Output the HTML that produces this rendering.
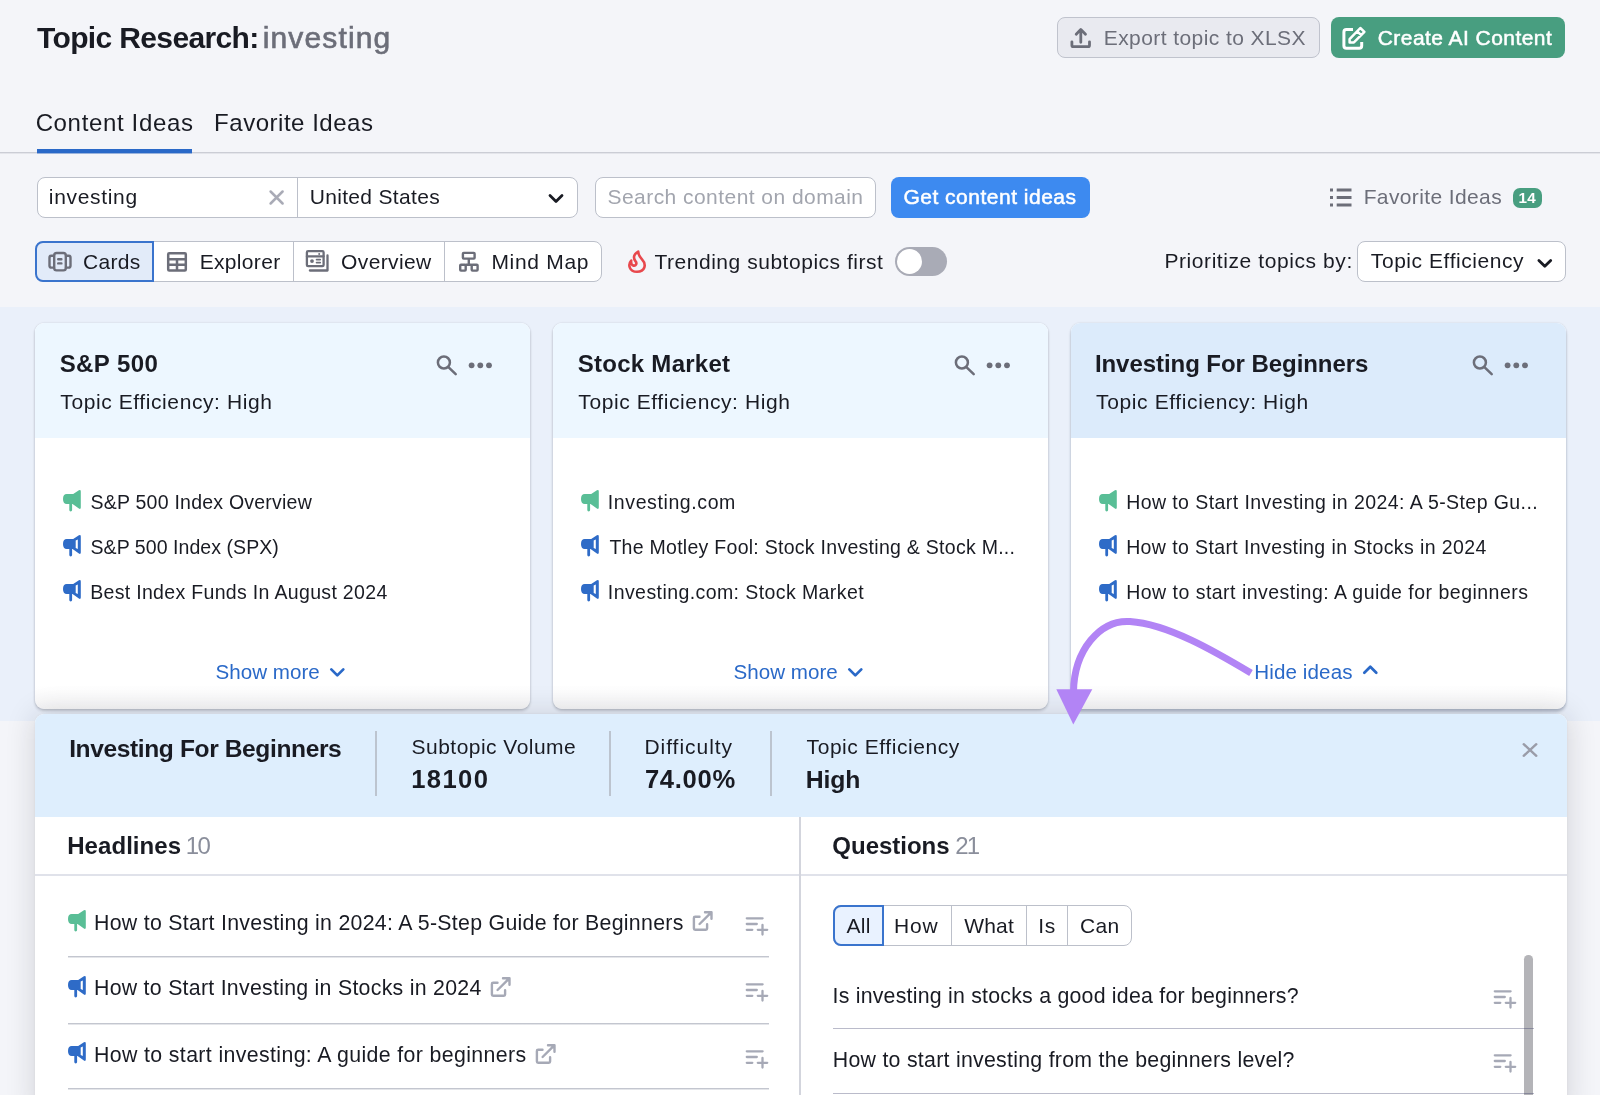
<!DOCTYPE html>
<html lang="en">
<head>
<meta charset="utf-8">
<title>Topic Research: investing</title>
<style>
html,body{margin:0;padding:0}
body{width:1600px;height:1095px;overflow:hidden;background:#f4f5f9;font-family:"Liberation Sans",Arial,sans-serif;color:#191b23}
#root{position:relative;width:1600px;height:1095px;overflow:hidden;background:#f4f5f9}
#root div,#root span,#root svg,#root button,#root a,#root header,#root nav,#root section,#root article,#root main,#root h1,#root h2,#root h3,#root p,#root ul,#root li,#root label{position:absolute;box-sizing:border-box;margin:0;padding:0;list-style:none;font-weight:400}
#root button{font:inherit;color:inherit;border:0;background:none;text-align:left}
#root .t{white-space:nowrap;line-height:1;text-decoration:none;color:#191b23;will-change:transform}
#root .box{background:#fff;border:1px solid #bcc0ca;border-radius:8px}
.vd{width:1px;background:#bcc0ca}
.hl{height:2px;background:linear-gradient(#c3c6cf 50%,rgba(195,198,207,.45) 50%)}
svg{overflow:visible}
.card{background:linear-gradient(#fff 0,#fff 94%,#f6f6f7 100%);border-radius:9px;box-shadow:0 2px 3px rgba(25,27,35,.2),0 0 2px rgba(25,27,35,.16);width:495px;height:386px;top:16px}
.card .hd{left:0;top:0;width:495px;height:115px;border-radius:9px 9px 0 0;background:#edf7ff}
.card.sel .hd{background:#dcebfb}
.card.sel{box-shadow:0 3px 3px rgba(25,40,70,.26),0 0 2px rgba(25,27,35,.16)}
</style>
</head>
<body>
<div id="root">
<header style="left:0;top:0;width:1600px;height:100px">
<h1 style="left:0;top:0;width:420px;height:70px"><span class="t" style="left:37px;top:23px;padding:0.08px 0 0 0.06px;font-size:30.03px;font-weight:700;letter-spacing:-0.65px;">Topic Research:</span><span class="t" style="left:262px;top:23px;padding:0.08px 0 0 0.72px;font-size:30.03px;letter-spacing:1.14px;color:#6c6e79;-webkit-text-stroke:0.65px #6c6e79;">investing</span></h1>
<button class="box" style="left:1057px;top:17px;width:263px;height:41px;background:#e9eaf0;border:1px solid #c0c3cd"><svg style="left:10px;top:7px" width="26" height="26" viewBox="1068 25 26 26" fill="none" stroke="#6c6e79" stroke-linecap="round" stroke-linejoin="round" stroke-width="2.8"><path d="M1080.8 42.3V29.6M1076.2 34.3l4.6-4.9 4.7 4.9M1071.9 41.8v3.4q0 1.5 1.5 1.5h14.6q1.5 0 1.5-1.5v-3.4"/></svg><span class="t" style="left:45px;top:9px;padding:0.22px 0 0 0.72px;font-size:21px;letter-spacing:0.42px;color:#6c6e79;">Export topic to XLSX</span></button>
<button style="left:1331px;top:17px;width:234px;height:41px;background:#489e80;border-radius:8px"><svg style="left:9px;top:7px" width="30" height="28" viewBox="1340 24 30 28" fill="none" stroke="#fff" stroke-width="3" stroke-linejoin="round"><path d="M1353 29.4h-6.6q-2.5 0-2.5 2.5v13.9q0 2.5 2.5 2.5h12.8q2.5 0 2.5-2.5v-3.7"/><path stroke-width="2.5" d="M1349.6 39.2l10.7-11.2 4.1 3.8-10.5 10.6h-4.3zM1357.2 31.3l4 3.8"/></svg><span class="t" style="left:46px;top:10px;padding:0.22px 0 0 0.7px;font-size:21px;letter-spacing:0.45px;color:#ffffff;-webkit-text-stroke:0.5px #ffffff;">Create AI Content</span></button>
</header>
<nav style="left:0;top:100px;width:1600px;height:54px">
<div style="left:0px;top:52px;width:1600px;height:2px;background:linear-gradient(#cbcdd5 50%,rgba(203,205,213,.4) 50%)"></div>
<a class="t" style="left:35px;top:10px;padding:0.65px 0 0 0.64px;font-size:24.04px;letter-spacing:0.64px;">Content Ideas</a><div style="left:37px;top:49px;width:155px;height:5px;background:linear-gradient(#2a69c8 80%,rgba(42,105,200,.4) 80%)"></div>
<a class="t" style="left:214px;top:10px;padding:0.65px 0 0 0.1px;font-size:24.04px;letter-spacing:0.51px;">Favorite Ideas</a>
</nav>
<section style="left:0;top:170px;width:1600px;height:56px">
<div class="box" style="left:37px;top:7px;width:541px;height:41px;"><span class="t" style="left:10px;top:7px;padding:0.72px 0 0 0.85px;font-size:21px;letter-spacing:0.67px;">investing</span><svg style="left:228px;top:9px" width="22" height="22" viewBox="266 187 22 22" fill="none" stroke="#a9abb6" stroke-width="2.5" stroke-linecap="round"><path d="M270.6 191.5l12 12M282.6 191.5l-12 12"/></svg><div class="vd" style="left:259px;top:0px;width:1px;height:39px;"></div><span class="t" style="left:271px;top:8px;padding:0.22px 0 0 0.65px;font-size:21px;letter-spacing:0.33px;">United States</span><svg style="left:507px;top:12px" width="22" height="18" viewBox="545 190 22 18" fill="none" stroke="#191b23" stroke-width="2.8" stroke-linecap="round" stroke-linejoin="round"><path d="M550 195.5l6 6 6-6"/></svg></div>
<div class="box" style="left:595px;top:7px;width:281px;height:41px;"><span class="t" style="left:11px;top:7px;padding:0.72px 0 0 0.51px;font-size:21px;letter-spacing:0.45px;color:#a2a5ae;">Search content on domain</span></div>
<button style="left:891px;top:7px;width:199px;height:41px;background:#3d8af0;border-radius:8px"><span class="t" style="left:12px;top:9px;padding:0.22px 0 0 0.44px;font-size:21px;letter-spacing:0.5px;color:#ffffff;-webkit-text-stroke:0.5px #ffffff;">Get content ideas</span></button>
<a style="left:1326px;top:14px;width:220px;height:28px;"><svg style="left:2px;top:2px" width="26" height="24" viewBox="1328 186 26 24" fill="none" stroke="#6c6e79" stroke-width="2.8"><path d="M1336.7 190h14.8M1336.7 197.5h14.8M1336.7 205h14.8M1330 190h3M1330 197.5h3M1330 205h3"/></svg><span class="t" style="left:37px;top:2px;padding:0.22px 0 0 0.64px;font-size:21px;letter-spacing:0.38px;color:#6c6e79;">Favorite Ideas</span><span style="left:187px;top:4px;width:29px;height:20px;border-radius:7px;background:#489e80"><span class="t" style="left:5px;top:1px;padding:0.81px 0 0 0.51px;font-size:15.23px;font-weight:700;letter-spacing:0.19px;color:#ffffff;">14</span></span></a>
</section>
<section style="left:0;top:236px;width:1600px;height:52px">
<div class="box" style="left:36px;top:5px;width:566px;height:41px;"><div style="left:-2px;top:-1px;width:119px;height:41px;background:#e2ebf9;border:2px solid #3a74cd;border-radius:8px 0 0 8px"></div><div class="vd" style="left:256px;top:0px;width:1px;height:39px;"></div><div class="vd" style="left:407px;top:0px;width:1px;height:39px;"></div><svg style="left:9px;top:8px" width="28" height="24" viewBox="46 250 28 24" fill="none" stroke="#6c6e79" stroke-linecap="round" stroke-linejoin="round" stroke-width="2.4"><rect x="54.2" y="253" width="11.6" height="17.4" rx="2.4"/><path d="M54 255.8h-2.6q-1.9 0-1.9 1.9v8q0 1.9 1.9 1.9h2.6M66 255.8h2.6q1.9 0 1.9 1.9v8q0 1.9-1.9 1.9h-2.6M58.2 259.3h3.2M58.2 263.4h3.2"/></svg><span class="t" style="left:45px;top:9px;padding:0.22px 0 0 0.96px;font-size:21px;letter-spacing:0.29px;">Cards</span><svg style="left:128px;top:8px" width="24" height="24" viewBox="165 250 24 24" fill="none" stroke="#6c6e79" stroke-width="2.5" stroke-linejoin="round"><rect x="168.2" y="253.2" width="17.6" height="17.2" rx="1"/><path d="M168.2 259.2h17.6M168.2 264.8h17.6M177 259.2v11.2"/></svg><span class="t" style="left:162px;top:9px;padding:0.22px 0 0 0.72px;font-size:21px;letter-spacing:0.32px;">Explorer</span><svg style="left:266px;top:6px" width="28" height="26" viewBox="303 248 28 26" fill="none" stroke="#6c6e79" stroke-linecap="round" stroke-linejoin="round" stroke-width="2.3"><rect x="306.9" y="251.2" width="16.7" height="15" rx="1.2"/><path d="M306.9 256.3h16.7M327.5 255.4v15.1h-17.6"/><path stroke-width="1.8" d="M316.6 259.6h3.6M316.6 262.6h3.6"/><circle cx="312" cy="261.1" r="1.9" fill="#6c6e79" stroke="none"/><circle cx="319.2" cy="253.9" r="1" fill="#6c6e79" stroke="none"/></svg><span class="t" style="left:304px;top:9px;padding:0.22px 0 0 0.09px;font-size:21px;letter-spacing:0.36px;">Overview</span><svg style="left:419px;top:7px" width="26" height="26" viewBox="456 249 26 26" fill="none" stroke="#6c6e79" stroke-width="2.4" stroke-linejoin="round"><rect x="462.9" y="252.9" width="11.7" height="5.7" rx=".8"/><rect x="460.2" y="264.8" width="5.5" height="5.8" rx=".8"/><rect x="471.7" y="264.8" width="5.9" height="5.8" rx=".8"/><path d="M468.8 258.6v6.2M465.7 264.8h6"/></svg><span class="t" style="left:454px;top:9px;padding:0.22px 0 0 0.4px;font-size:21px;letter-spacing:0.69px;">Mind Map</span></div>
<label style="left:624px;top:8px;width:326px;height:34px;"><svg style="left:2px;top:4px" width="24" height="28" viewBox="626 247.3 24 28" fill="none" stroke="#e8484d" stroke-width="2.6" stroke-linejoin="round" stroke-linecap="round"><path d="M638.2 250.9c-4.8 2.6-5.2 6.6-2.6 9.7 1.7 2.1 .3 4.7-2 4.3-1.8-.3-2.7-2.6-2.4-5-3.4 3.8-2.2 11.2 5.8 11.2 8 0 9.8-7.3 5-12.4-2.1-2.3-3.7-4.8-3.8-7.8z"/></svg><span class="t" style="left:30px;top:7px;padding:0.22px 0 0 0.45px;font-size:21px;letter-spacing:0.53px;">Trending subtopics first</span><span style="left:271px;top:3px;width:52px;height:29px;border-radius:14.5px;background:#a9abb6"><span style="left:2px;top:2px;width:25px;height:25px;border-radius:50%;background:#fff"></span></span></label>
<label class="t" style="left:1164px;top:13px;padding:0.72px 0 0 0.4px;font-size:21px;letter-spacing:0.58px;">Prioritize topics by:</label>
<div class="box" style="left:1357px;top:5px;width:209px;height:41px;"><span class="t" style="left:12px;top:8px;padding:0.22px 0 0 0.84px;font-size:21px;letter-spacing:0.56px;">Topic Efficiency</span><svg style="left:176px;top:13px" width="22" height="18" viewBox="1534 255 22 18" fill="none" stroke="#191b23" stroke-width="2.8" stroke-linecap="round" stroke-linejoin="round"><path d="M1538.9 260.4l5.9 5.9 5.9-5.9"/></svg></div>
</section>
<main style="left:0;top:307px;width:1600px;height:788px">
<div style="left:0;top:0;width:1600px;height:414px;background:#eaf0fa"></div>
<article class="card" style="left:35px">
<div class="hd"><h3 class="t" style="left:24px;top:28px;padding:0.65px 0 0 0.68px;font-size:24.04px;font-weight:700;letter-spacing:0.4px;">S&amp;P 500</h3><p class="t" style="left:25px;top:68px;padding:0.22px 0 0 0.31px;font-size:21px;letter-spacing:0.59px;">Topic Efficiency: High</p><svg style="left:398px;top:30px" width="64" height="26" viewBox="398 30 64 26" fill="none" stroke="#6c6e79" stroke-width="2.5" stroke-linecap="round"><circle cx="408.9" cy="39.5" r="6"/><path d="M413.4 44.1l7.3 7.1"/><g fill="#6c6e79" stroke="none"><circle cx="436.6" cy="42.3" r="2.9"/><circle cx="445.3" cy="42.3" r="2.9"/><circle cx="454" cy="42.3" r="2.9"/></g></svg></div>
<ul style="left:0;top:150px;width:495px;height:140px">
<li><svg style="left:27.7px;top:16.9px" width="18" height="22" viewBox="0 0 18 22"><path fill="#59be96" d="M3.8 4H10.2L15.9 .3Q17.8-.6 17.8 1.4V17.5Q17.8 19.5 15.9 18.6L9.6 13.9H9.1V20Q9.1 21.4 7.7 21.4Q6.3 21.4 6.3 20V13.9H3.8Q0 13.9 0 8.95Q0 4 3.8 4Z"/></svg><span class="t" style="left:55px;top:20px;padding:0.22px 0 0 0.55px;font-size:19.53px;letter-spacing:0.22px;">S&amp;P 500 Index Overview</span></li>
<li><svg style="left:27.7px;top:62.15px" width="18" height="22" viewBox="0 0 18 22"><path fill="#2e6bc7" fill-rule="evenodd" d="M3.8 4H10.2L15.9 .3Q17.8-.6 17.8 1.4V17.5Q17.8 19.5 15.9 18.6L9.6 13.9H9.1V20Q9.1 21.4 7.7 21.4Q6.3 21.4 6.3 20V13.9H3.8Q0 13.9 0 8.95Q0 4 3.8 4ZM12.7 5.5L14.8 4.6V14.1L12.7 13.1Z"/></svg><span class="t" style="left:55px;top:65px;padding:0.22px 0 0 0.55px;font-size:19.53px;letter-spacing:0.05px;">S&amp;P 500 Index (SPX)</span></li>
<li><svg style="left:27.7px;top:107.4px" width="18" height="22" viewBox="0 0 18 22"><path fill="#2e6bc7" fill-rule="evenodd" d="M3.8 4H10.2L15.9 .3Q17.8-.6 17.8 1.4V17.5Q17.8 19.5 15.9 18.6L9.6 13.9H9.1V20Q9.1 21.4 7.7 21.4Q6.3 21.4 6.3 20V13.9H3.8Q0 13.9 0 8.95Q0 4 3.8 4ZM12.7 5.5L14.8 4.6V14.1L12.7 13.1Z"/></svg><span class="t" style="left:55px;top:109px;padding:0.72px 0 0 0.13px;font-size:19.53px;letter-spacing:0.32px;">Best Index Funds In August 2024</span></li>
</ul>
<a class="t" style="left:180px;top:338px;padding:0.78px 0 0 0.55px;font-size:20.58px;letter-spacing:0.008px;color:#2a69c8;">Show more</a><svg style="left:292px;top:341px" width="22" height="16" viewBox="292 341 22 16" fill="none" stroke="#2a69c8" stroke-width="2.7" stroke-linecap="round" stroke-linejoin="round"><path d="M296.3 346.4l6 6 6-6"/></svg>
</article>
<article class="card" style="left:553px">
<div class="hd"><h3 class="t" style="left:24px;top:28px;padding:0.65px 0 0 0.68px;font-size:24.04px;font-weight:700;letter-spacing:0.26px;">Stock Market</h3><p class="t" style="left:25px;top:68px;padding:0.22px 0 0 0.31px;font-size:21px;letter-spacing:0.59px;">Topic Efficiency: High</p><svg style="left:398px;top:30px" width="64" height="26" viewBox="398 30 64 26" fill="none" stroke="#6c6e79" stroke-width="2.5" stroke-linecap="round"><circle cx="408.9" cy="39.5" r="6"/><path d="M413.4 44.1l7.3 7.1"/><g fill="#6c6e79" stroke="none"><circle cx="436.6" cy="42.3" r="2.9"/><circle cx="445.3" cy="42.3" r="2.9"/><circle cx="454" cy="42.3" r="2.9"/></g></svg></div>
<ul style="left:0;top:150px;width:495px;height:140px">
<li><svg style="left:27.7px;top:16.9px" width="18" height="22" viewBox="0 0 18 22"><path fill="#59be96" d="M3.8 4H10.2L15.9 .3Q17.8-.6 17.8 1.4V17.5Q17.8 19.5 15.9 18.6L9.6 13.9H9.1V20Q9.1 21.4 7.7 21.4Q6.3 21.4 6.3 20V13.9H3.8Q0 13.9 0 8.95Q0 4 3.8 4Z"/></svg><span class="t" style="left:54px;top:20px;padding:0.22px 0 0 0.87px;font-size:19.53px;letter-spacing:0.59px;">Investing.com</span></li>
<li><svg style="left:27.7px;top:62.15px" width="18" height="22" viewBox="0 0 18 22"><path fill="#2e6bc7" fill-rule="evenodd" d="M3.8 4H10.2L15.9 .3Q17.8-.6 17.8 1.4V17.5Q17.8 19.5 15.9 18.6L9.6 13.9H9.1V20Q9.1 21.4 7.7 21.4Q6.3 21.4 6.3 20V13.9H3.8Q0 13.9 0 8.95Q0 4 3.8 4ZM12.7 5.5L14.8 4.6V14.1L12.7 13.1Z"/></svg><span class="t" style="left:56px;top:65px;padding:0.22px 0 0 0.4px;font-size:19.53px;letter-spacing:0.27px;">The Motley Fool: Stock Investing &amp; Stock M...</span></li>
<li><svg style="left:27.7px;top:107.4px" width="18" height="22" viewBox="0 0 18 22"><path fill="#2e6bc7" fill-rule="evenodd" d="M3.8 4H10.2L15.9 .3Q17.8-.6 17.8 1.4V17.5Q17.8 19.5 15.9 18.6L9.6 13.9H9.1V20Q9.1 21.4 7.7 21.4Q6.3 21.4 6.3 20V13.9H3.8Q0 13.9 0 8.95Q0 4 3.8 4ZM12.7 5.5L14.8 4.6V14.1L12.7 13.1Z"/></svg><span class="t" style="left:54px;top:109px;padding:0.72px 0 0 0.87px;font-size:19.53px;letter-spacing:0.41px;">Investing.com: Stock Market</span></li>
</ul>
<a class="t" style="left:180px;top:338px;padding:0.78px 0 0 0.55px;font-size:20.58px;letter-spacing:0.008px;color:#2a69c8;">Show more</a><svg style="left:292px;top:341px" width="22" height="16" viewBox="292 341 22 16" fill="none" stroke="#2a69c8" stroke-width="2.7" stroke-linecap="round" stroke-linejoin="round"><path d="M296.3 346.4l6 6 6-6"/></svg>
</article>
<article class="card sel" style="left:1071px">
<div class="hd"><h3 class="t" style="left:23px;top:28px;padding:0.65px 0 0 0.9px;font-size:24.04px;font-weight:700;letter-spacing:-0.07px;">Investing For Beginners</h3><p class="t" style="left:25px;top:68px;padding:0.22px 0 0 0.12px;font-size:21px;letter-spacing:0.61px;">Topic Efficiency: High</p><svg style="left:398px;top:30px" width="64" height="26" viewBox="398 30 64 26" fill="none" stroke="#6c6e79" stroke-width="2.5" stroke-linecap="round"><circle cx="408.9" cy="39.5" r="6"/><path d="M413.4 44.1l7.3 7.1"/><g fill="#6c6e79" stroke="none"><circle cx="436.6" cy="42.3" r="2.9"/><circle cx="445.3" cy="42.3" r="2.9"/><circle cx="454" cy="42.3" r="2.9"/></g></svg></div>
<ul style="left:0;top:150px;width:495px;height:140px">
<li><svg style="left:27.7px;top:16.9px" width="18" height="22" viewBox="0 0 18 22"><path fill="#59be96" d="M3.8 4H10.2L15.9 .3Q17.8-.6 17.8 1.4V17.5Q17.8 19.5 15.9 18.6L9.6 13.9H9.1V20Q9.1 21.4 7.7 21.4Q6.3 21.4 6.3 20V13.9H3.8Q0 13.9 0 8.95Q0 4 3.8 4Z"/></svg><span class="t" style="left:55px;top:20px;padding:0.22px 0 0 0.13px;font-size:19.53px;letter-spacing:0.42px;">How to Start Investing in 2024: A 5-Step Gu...</span></li>
<li><svg style="left:27.7px;top:62.15px" width="18" height="22" viewBox="0 0 18 22"><path fill="#2e6bc7" fill-rule="evenodd" d="M3.8 4H10.2L15.9 .3Q17.8-.6 17.8 1.4V17.5Q17.8 19.5 15.9 18.6L9.6 13.9H9.1V20Q9.1 21.4 7.7 21.4Q6.3 21.4 6.3 20V13.9H3.8Q0 13.9 0 8.95Q0 4 3.8 4ZM12.7 5.5L14.8 4.6V14.1L12.7 13.1Z"/></svg><span class="t" style="left:55px;top:65px;padding:0.22px 0 0 0.13px;font-size:19.53px;letter-spacing:0.39px;">How to Start Investing in Stocks in 2024</span></li>
<li><svg style="left:27.7px;top:107.4px" width="18" height="22" viewBox="0 0 18 22"><path fill="#2e6bc7" fill-rule="evenodd" d="M3.8 4H10.2L15.9 .3Q17.8-.6 17.8 1.4V17.5Q17.8 19.5 15.9 18.6L9.6 13.9H9.1V20Q9.1 21.4 7.7 21.4Q6.3 21.4 6.3 20V13.9H3.8Q0 13.9 0 8.95Q0 4 3.8 4ZM12.7 5.5L14.8 4.6V14.1L12.7 13.1Z"/></svg><span class="t" style="left:55px;top:109px;padding:0.72px 0 0 0.13px;font-size:19.53px;letter-spacing:0.48px;">How to start investing: A guide for beginners</span></li>
</ul>
<a class="t" style="left:183px;top:338px;padding:0.78px 0 0 0.34px;font-size:20.58px;letter-spacing:0.1px;color:#2a69c8;">Hide ideas</a><svg style="left:289px;top:339px" width="22" height="16" viewBox="289 339 22 16" fill="none" stroke="#2a69c8" stroke-width="2.7" stroke-linecap="round" stroke-linejoin="round"><path d="M293.3 349.8l6-6 6 6"/></svg>
</article>
<section id="panel" style="left:35px;top:407px;width:1531.5px;height:400px;background:#fff;border-radius:9px 9px 0 0;box-shadow:0 0 30px rgba(25,27,35,.16),0 0 3px rgba(25,27,35,.06)">
<div style="left:0px;top:0px;width:1531.5px;height:103px;background:#deeefd;border-radius:9px 9px 0 0"><h2 class="t" style="left:34px;top:23px;padding:0.2px 0 0 0.16px;font-size:24.57px;font-weight:700;letter-spacing:-0.39px;">Investing For Beginners</h2><div style="left:340.4px;top:17px;width:1.4px;height:65px;background:#bcc4cf"></div><div style="left:574.4px;top:17px;width:1.4px;height:65px;background:#bcc4cf"></div><div style="left:735.2px;top:17px;width:1.4px;height:65px;background:#bcc4cf"></div><span class="t" style="left:376px;top:22px;padding:0.22px 0 0 0.58px;font-size:21px;letter-spacing:0.47px;">Subtopic Volume</span><span class="t" style="left:376px;top:52px;padding:0.91px 0 0 0.17px;font-size:25.62px;font-weight:700;letter-spacing:1.38px;">18100</span><span class="t" style="left:609px;top:22px;padding:0.22px 0 0 0.4px;font-size:21px;letter-spacing:0.97px;">Difficulty</span><span class="t" style="left:609px;top:52px;padding:0.91px 0 0 0.95px;font-size:25.62px;font-weight:700;letter-spacing:0.68px;">74.00%</span><span class="t" style="left:771px;top:22px;padding:0.22px 0 0 0.62px;font-size:21px;letter-spacing:0.55px;">Topic Efficiency</span><span class="t" style="left:770px;top:53px;padding:0.62px 0 0 0.85px;font-size:24.78px;font-weight:700;letter-spacing:-0.18px;">High</span><svg style="left:1483.7px;top:25.1px" width="22" height="22" viewBox="-11 -11 22 22" fill="none" stroke="#9a9ca8" stroke-width="2.4" stroke-linecap="round"><path d="M-6.3-5.8l12.6 11.6M6.3-5.8l-12.6 11.6"/></svg></div>
<div style="left:0px;top:160px;width:1531.5px;height:1.5px;background:#e0e2ea"></div><div style="left:764.4px;top:103px;width:1.6px;height:300px;background:#d3d5dd"></div>
<section style="left:0;top:103px;width:765px;height:297px">
<h3><span class="t" style="left:32px;top:16px;padding:0.85px 0 0 0.22px;font-size:24.04px;font-weight:700;letter-spacing:0.04px;">Headlines</span><span class="t" style="left:150px;top:16px;padding:0.65px 0 0 0.74px;font-size:24.04px;letter-spacing:-1.49px;color:#8a8e9b;">10</span></h3>
<ul>
<li><svg style="left:32.5px;top:92.5px" width="18" height="22" viewBox="0 0 18 22"><path fill="#59be96" d="M3.8 4H10.2L15.9 .3Q17.8-.6 17.8 1.4V17.5Q17.8 19.5 15.9 18.6L9.6 13.9H9.1V20Q9.1 21.4 7.7 21.4Q6.3 21.4 6.3 20V13.9H3.8Q0 13.9 0 8.95Q0 4 3.8 4Z"/></svg><a class="t" style="left:58px;top:95px;padding:0.56px 0 0 0.99px;font-size:21.32px;letter-spacing:0.29px;">How to Start Investing in 2024: A 5-Step Guide for Beginners</a><svg style="left:655px;top:92px" width="26" height="25" viewBox="690 909 26 25" fill="none" stroke="#a6a9b6" stroke-width="2.4" stroke-linecap="round" stroke-linejoin="round"><path d="M699.5 916.7h-4.4q-1.2 0-1.2 1.2v10.6q0 1.2 1.2 1.2h10.8q1.2 0 1.2-1.2v-4.3M699.6 924l11.4-11.4M705 912.2h6.5v6.5"/></svg><svg style="left:708px;top:98px" width="28" height="23" viewBox="743 915 28 23" fill="none" stroke="#a6a9b6" stroke-width="2.3" stroke-linecap="round"><path d="M746.8 918.3h15.8M746.8 924h10M746.8 929.8h5.5M757.8 929.8h9.4M762.5 925v9.6"/></svg><div class="hl" style="left:32.5px;top:139px;width:701.3px;height:2px;"></div></li>
<li><svg style="left:32.5px;top:158.75px" width="18" height="22" viewBox="0 0 18 22"><path fill="#2e6bc7" fill-rule="evenodd" d="M3.8 4H10.2L15.9 .3Q17.8-.6 17.8 1.4V17.5Q17.8 19.5 15.9 18.6L9.6 13.9H9.1V20Q9.1 21.4 7.7 21.4Q6.3 21.4 6.3 20V13.9H3.8Q0 13.9 0 8.95Q0 4 3.8 4ZM12.7 5.5L14.8 4.6V14.1L12.7 13.1Z"/></svg><a class="t" style="left:58px;top:161px;padding:0.16px 0 0 0.99px;font-size:21.32px;letter-spacing:0.27px;">How to Start Investing in Stocks in 2024</a><svg style="left:453.15px;top:158.25px" width="26" height="25" viewBox="690 909 26 25" fill="none" stroke="#a6a9b6" stroke-width="2.4" stroke-linecap="round" stroke-linejoin="round"><path d="M699.5 916.7h-4.4q-1.2 0-1.2 1.2v10.6q0 1.2 1.2 1.2h10.8q1.2 0 1.2-1.2v-4.3M699.6 924l11.4-11.4M705 912.2h6.5v6.5"/></svg><svg style="left:708px;top:164.25px" width="28" height="23" viewBox="743 915 28 23" fill="none" stroke="#a6a9b6" stroke-width="2.3" stroke-linecap="round"><path d="M746.8 918.3h15.8M746.8 924h10M746.8 929.8h5.5M757.8 929.8h9.4M762.5 925v9.6"/></svg><div class="hl" style="left:32.5px;top:206px;width:701.3px;height:2px;"></div></li>
<li><svg style="left:32.5px;top:225px" width="18" height="22" viewBox="0 0 18 22"><path fill="#2e6bc7" fill-rule="evenodd" d="M3.8 4H10.2L15.9 .3Q17.8-.6 17.8 1.4V17.5Q17.8 19.5 15.9 18.6L9.6 13.9H9.1V20Q9.1 21.4 7.7 21.4Q6.3 21.4 6.3 20V13.9H3.8Q0 13.9 0 8.95Q0 4 3.8 4ZM12.7 5.5L14.8 4.6V14.1L12.7 13.1Z"/></svg><a class="t" style="left:58px;top:227px;padding:0.96px 0 0 0.99px;font-size:21.32px;letter-spacing:0.37px;">How to start investing: A guide for beginners</a><svg style="left:497.8px;top:224.5px" width="26" height="25" viewBox="690 909 26 25" fill="none" stroke="#a6a9b6" stroke-width="2.4" stroke-linecap="round" stroke-linejoin="round"><path d="M699.5 916.7h-4.4q-1.2 0-1.2 1.2v10.6q0 1.2 1.2 1.2h10.8q1.2 0 1.2-1.2v-4.3M699.6 924l11.4-11.4M705 912.2h6.5v6.5"/></svg><svg style="left:708px;top:230.5px" width="28" height="23" viewBox="743 915 28 23" fill="none" stroke="#a6a9b6" stroke-width="2.3" stroke-linecap="round"><path d="M746.8 918.3h15.8M746.8 924h10M746.8 929.8h5.5M757.8 929.8h9.4M762.5 925v9.6"/></svg><div class="hl" style="left:32.5px;top:271px;width:701.3px;height:2px;"></div></li>
</ul>
</section>
<section style="left:766px;top:103px;width:765px;height:297px">
<h3><span class="t" style="left:31px;top:16px;padding:0.65px 0 0 0.31px;font-size:24.04px;font-weight:700;letter-spacing:-0.02px;">Questions</span><span class="t" style="left:154px;top:16px;padding:0.65px 0 0 0.29px;font-size:24.04px;letter-spacing:-1.97px;color:#8a8e9b;">21</span></h3>
<div class="box" style="left:32px;top:88px;width:299px;height:41px;"><div style="left:-1px;top:-1px;width:51px;height:41px;background:#e9f2ff;border:2px solid #3a74cd;border-radius:8px 0 0 8px"></div><div class="vd" style="left:117px;top:0px;width:1px;height:39px;"></div><div class="vd" style="left:192px;top:0px;width:1px;height:39px;"></div><div class="vd" style="left:233px;top:0px;width:1px;height:39px;"></div><button class="t" style="left:12px;top:8px;padding:0.82px 0 0 0.59px;font-size:21px;letter-spacing:0.24px;">All</button><button class="t" style="left:60px;top:8px;padding:0.82px 0 0 0.07px;font-size:21px;letter-spacing:0.81px;">How</button><button class="t" style="left:130px;top:8px;padding:0.82px 0 0 0.27px;font-size:21px;letter-spacing:0.17px;">What</button><button class="t" style="left:204px;top:8px;padding:0.82px 0 0 0.18px;font-size:21px;letter-spacing:0.77px;">Is</button><button class="t" style="left:245px;top:8px;padding:0.82px 0 0 0.96px;font-size:21px;letter-spacing:0.3px;">Can</button></div>
<div style="left:723px;top:138px;width:8.6px;height:200px;border-radius:4.3px;background:#b4b4b8"></div>
<ul>
<li><span class="t" style="left:31px;top:168px;padding:0.76px 0 0 0.51px;font-size:21.32px;letter-spacing:0.23px;">Is investing in stocks a good idea for beginners?</span><svg style="left:689.9px;top:170.5px" width="28" height="23" viewBox="743 915 28 23" fill="none" stroke="#a6a9b6" stroke-width="2.3" stroke-linecap="round"><path d="M746.8 918.3h15.8M746.8 924h10M746.8 929.8h5.5M757.8 929.8h9.4M762.5 925v9.6"/></svg><div style="left:32px;top:210.8px;width:700.7px;height:1.3px;background:rgba(40,44,90,.32)"></div></li>
<li><span class="t" style="left:31px;top:233px;padding:0.16px 0 0 0.81px;font-size:21.32px;letter-spacing:0.27px;">How to start investing from the beginners level?</span><svg style="left:689.9px;top:234.7px" width="28" height="23" viewBox="743 915 28 23" fill="none" stroke="#a6a9b6" stroke-width="2.3" stroke-linecap="round"><path d="M746.8 918.3h15.8M746.8 924h10M746.8 929.8h5.5M757.8 929.8h9.4M762.5 925v9.6"/></svg><div style="left:32px;top:275.7px;width:700.7px;height:1.3px;background:rgba(40,44,90,.32)"></div></li>
</ul>
</section>
</section>
</main>
<svg style="left:1040px;top:600px" width="240" height="140" viewBox="1040 600 240 140" fill="none"><path d="M1251 673C1215 651.5 1168 624 1130 621.5C1100 619.5 1074 650 1073.5 692" stroke="#b284f5" stroke-width="7"/><path d="M1056.3 689.2h36l-19 35.3z" fill="#b284f5"/></svg>
</div>
</body>
</html>
